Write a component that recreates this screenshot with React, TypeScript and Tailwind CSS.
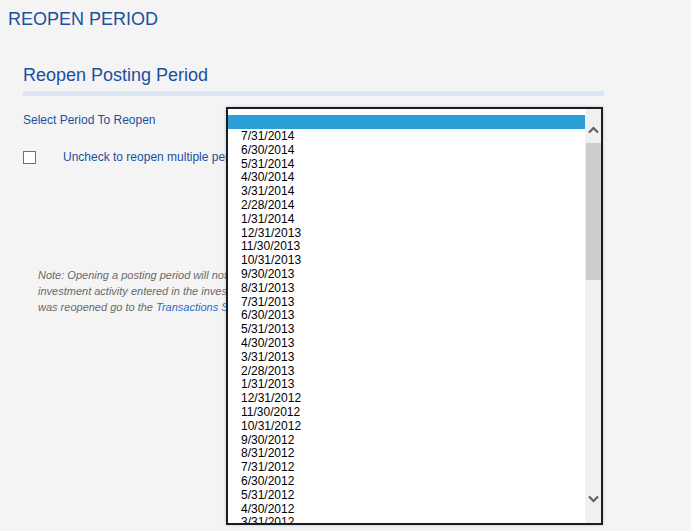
import React from "react";

const buildPeriods = () => {
  const periods: string[] = [];
  let year = 2014;
  let month = 7;
  for (let i = 0; i < 34; i++) {
    const lastDay = new Date(year, month, 0).getDate();
    periods.push(`${month}/${lastDay}/${year}`);
    month -= 1;
    if (month === 0) {
      month = 12;
      year -= 1;
    }
  }
  return periods;
};

function PeriodDropdown() {
  const periods = buildPeriods();
  return (
    <div className="absolute left-[226px] top-[107px] w-[377px] h-[418px] border-2 border-[#1c1c1c] bg-white flex shadow-[0_0_3px_rgba(120,170,230,0.6)]">
      <div className="flex-1 overflow-hidden pt-[6px]">
        <div className="h-[14px] bg-[#2a9fd8]" />
        {periods.map((p) => (
          <div key={p} className="h-[13.8px] leading-[14.8px] pl-[13px] text-[12px] text-black">
            {p}
          </div>
        ))}
      </div>
      <div className="w-[16px] bg-[#f0f0f0] flex flex-col">
        <div className="h-[34px] flex items-start justify-center pt-[17px]">
          <svg width="11" height="8" viewBox="0 0 11 8">
            <path d="M1 6.5 L5.5 2 L10 6.5" fill="none" stroke="#606060" strokeWidth="2.2" />
          </svg>
        </div>
        <div className="ml-[1px] h-[137px] bg-[#cdcdcd]" />
        <div className="flex-1" />
        <div className="h-[34px] flex items-start justify-center pt-[6px]">
          <svg width="11" height="8" viewBox="0 0 11 8">
            <path d="M1 1.5 L5.5 6 L10 1.5" fill="none" stroke="#606060" strokeWidth="2.2" />
          </svg>
        </div>
      </div>
    </div>
  );
}

export default function App() {
  return (
    <div className="relative min-h-[531px] bg-[#f4f4f4] font-['Liberation_Sans',Arial,sans-serif] overflow-hidden">
      <div className="pt-[9px] pl-[8px] text-[18px] leading-[21px] text-[#1c4f9f]">REOPEN PERIOD</div>

      <div className="ml-[23px] w-[581px] mt-[34px]">
        <h2 className="text-[18px] leading-[22px] text-[#1c4f9f]">Reopen Posting Period</h2>
        <div className="mt-[5px] h-[5px] bg-[#dbe5f4]" />

        <div className="mt-[16px] text-[12px] leading-[16px] text-[#1c4f9f]">Select Period To Reopen</div>

        <div className="mt-[21px] flex items-center h-[16px]">
          <div className="w-[13px] h-[13px] border border-[#707070] bg-white" />
          <span className="ml-[27px] text-[12px] leading-[16px] text-[#1c4f9f]">
            Uncheck to reopen multiple periods at once
          </span>
        </div>

        <p className="mt-[102px] ml-[15px] text-[11px] leading-[16px] italic text-[#6a6a6a]">
          Note: Opening a posting period will not reverse any previously posted entries.
          <br />
          investment activity entered in the investment module will remain unchanged. To review what
          <br />
          was reopened go to the <span className="text-[#2a6cc9]">Transactions Summary</span> page.
        </p>
      </div>

      <PeriodDropdown />
    </div>
  );
}
